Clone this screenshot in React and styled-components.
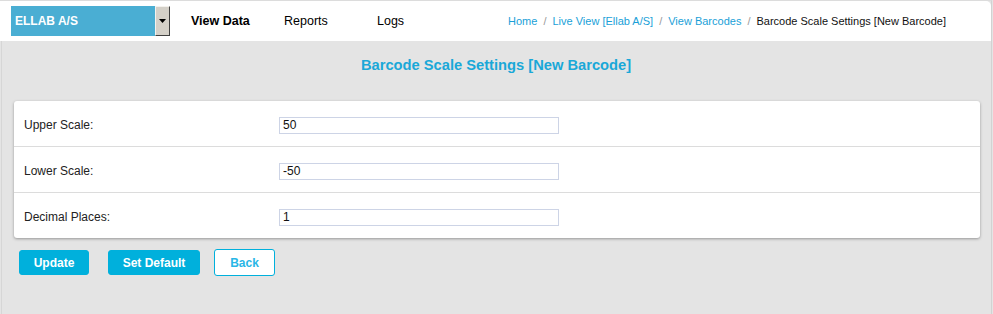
import React from "react";
import styled, { createGlobalStyle } from "styled-components";

const Global = createGlobalStyle`
  html, body { margin: 0; padding: 0; }
  body {
    background: #e4e4e4;
    font-family: "Liberation Sans", Arial, sans-serif;
    color: #222;
  }
`;

const Page = styled.div`
  min-height: 314px;
  box-sizing: border-box;
  border-top: 1px solid #dcdcdc;
  background: #e4e4e4;
  display: flex;
  flex-direction: column;
  margin-right: 1px;
  border-right: 1px solid #d2d2d2;
`;

const Header = styled.header`
  height: 40px;
  background: #fff;
  border-top-right-radius: 5px;
  display: flex;
  align-items: center;
  padding-left: 11px;
  padding-right: 45px;
`;

const Select = styled.div`
  width: 159px;
  height: 30px;
  display: flex;
  background: #4aaed3;
  align-items: stretch;
`;

const SelectText = styled.div`
  flex: 1;
  color: #fff;
  font-weight: bold;
  font-size: 12px;
  display: flex;
  align-items: center;
  padding-left: 4px;
`;

const SelectBtn = styled.div`
  width: 15px;
  box-sizing: border-box;
  background: #d4d0c8;
  border-top: 1px solid #f4f2ee;
  border-left: 1px solid #f4f2ee;
  border-right: 1px solid #404040;
  border-bottom: 1px solid #404040;
  display: flex;
  align-items: center;
  justify-content: center;
`;

const Nav = styled.nav`
  display: flex;
  margin-left: 21px;
`;

const NavItem = styled.a`
  font-size: 12.5px;
  color: #000;
  font-weight: ${(p) => (p.$active ? "bold" : "normal")};
  width: ${(p) => p.$w}px;
  text-decoration: none;
`;

const Crumbs = styled.div`
  margin-left: auto;
  font-size: 11px;
  display: flex;
  gap: 6px;
  color: #999;
`;

const Crumb = styled.a`
  color: ${(p) => (p.$current ? "#111" : "#1a9fd8")};
  text-decoration: none;
`;

const Main = styled.main`
  padding: 0 11px 0 12px;
  display: flex;
  flex-direction: column;
  border-left: 1px solid #d6d6d6;
  margin-left: 1px;
  flex: 1;
`;

const Title = styled.h1`
  margin: 0 -11px 0 -13px;
  height: 60px;
  box-sizing: border-box;
  padding-top: 16px;
  text-align: center;
  font-size: 14.7px;
  font-weight: bold;
  color: #1aa8d8;
`;

const Card = styled.section`
  background: #fff;
  border-radius: 3px;
  box-shadow: 0 1px 3px rgba(0, 0, 0, 0.35);
`;

const Row = styled.div`
  height: 45px;
  box-sizing: border-box;
  padding-top: 3px;
  display: flex;
  align-items: center;
  padding-left: 10px;
  & + & {
    border-top: 1px solid #dcdcdc;
    height: 46px;
  }
`;

const Label = styled.label`
  width: 255px;
  font-size: 12px;
  color: #222;
`;

const Input = styled.input`
  width: 280px;
  height: 17px;
  box-sizing: border-box;
  border: 1px solid #cdd4e6;
  font-family: "Liberation Sans", Arial, sans-serif;
  font-size: 12px;
  padding: 0 3px;
  color: #111;
  outline: none;
`;

const Actions = styled.div`
  display: flex;
  align-items: center;
  margin-top: 11px;
  margin-left: 5px;
`;

const Button = styled.button`
  height: ${(p) => (p.$outline ? 27 : 25)}px;
  width: ${(p) => p.$w}px;
  margin-right: ${(p) => p.$mr}px;
  box-sizing: border-box;
  border-radius: 3px;
  border: 1px solid #00b0dc;
  background: ${(p) => (p.$outline ? "#fff" : "#00b0dc")};
  color: ${(p) => (p.$outline ? "#29b6e6" : "#fff")};
  font-family: "Liberation Sans", Arial, sans-serif;
  font-weight: bold;
  font-size: 12px;
  padding: 0;
  cursor: pointer;
`;

export default function App() {
  return (
    <>
      <Global />
      <Page>
        <Header>
          <Select>
            <SelectText>ELLAB A/S</SelectText>
            <SelectBtn>
              <svg width="7" height="4" viewBox="0 0 7 4">
                <path d="M0 0h7L3.5 4z" fill="#000" />
              </svg>
            </SelectBtn>
          </Select>
          <Nav>
            <NavItem $active $w={93}>View Data</NavItem>
            <NavItem $w={93}>Reports</NavItem>
            <NavItem $w={60}>Logs</NavItem>
          </Nav>
          <Crumbs>
            <Crumb>Home</Crumb>/
            <Crumb>Live View [Ellab A/S]</Crumb>/
            <Crumb>View Barcodes</Crumb>/
            <Crumb $current>Barcode Scale Settings [New Barcode]</Crumb>
          </Crumbs>
        </Header>
        <Main>
          <Title>Barcode Scale Settings [New Barcode]</Title>
          <Card>
            <Row>
              <Label>Upper Scale:</Label>
              <Input defaultValue="50" />
            </Row>
            <Row>
              <Label>Lower Scale:</Label>
              <Input defaultValue="-50" />
            </Row>
            <Row>
              <Label>Decimal Places:</Label>
              <Input defaultValue="1" />
            </Row>
          </Card>
          <Actions>
            <Button $w={70} $mr={19}>Update</Button>
            <Button $w={92} $mr={14}>Set Default</Button>
            <Button $outline $w={61} $mr={0}>Back</Button>
          </Actions>
        </Main>
      </Page>
    </>
  );
}
